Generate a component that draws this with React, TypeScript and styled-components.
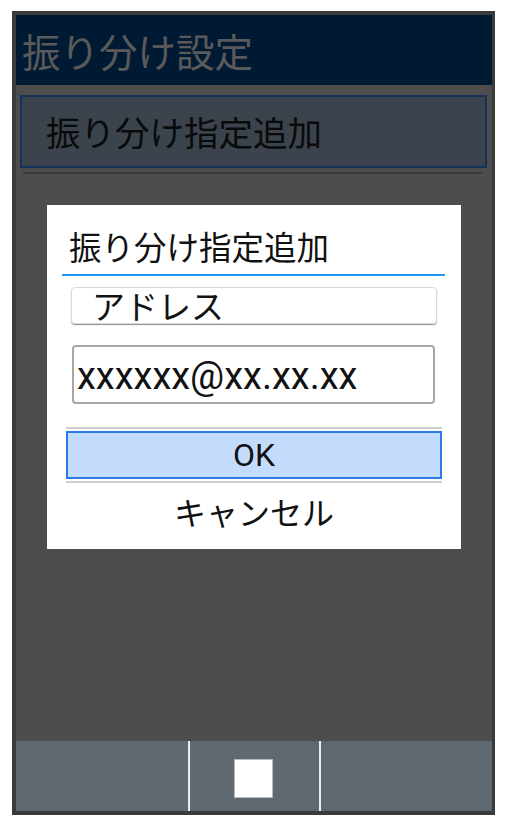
import React from "react";
import styled, { createGlobalStyle } from "styled-components";

const Global = createGlobalStyle`
  html, body { margin: 0; padding: 0; background: #ffffff; }
  body { font-family: Roboto, "Noto Sans CJK JP", sans-serif; }
  * { box-sizing: border-box; }
`;

const JP = `"Noto Sans CJK JP", "Noto Sans", sans-serif`;
const LATIN = `Roboto, "Noto Sans CJK JP", sans-serif`;

const Frame = styled.div`
  margin: 11px 0 0 12px;
  width: 483px;
  height: 804px;
  border: 4px solid #3a3a3a;
  border-right-width: 3px;
  display: flex;
  flex-direction: column;
  background: #4d4d4d;
`;

const TitleBar = styled.div`
  height: 70px;
  background: #011a33;
  display: flex;
  align-items: center;
  padding-left: 6px;
  font-family: ${JP};
  font-size: 38.5px;
  line-height: 1;
  color: #5a5a5a;
`;

const Content = styled.div`
  position: relative;
  flex: 1;
  display: flex;
  flex-direction: column;
  padding: 10px 4px 0 4px;
`;

const ListItem = styled.div`
  height: 73px;
  width: 467px;
  background: #3b434c;
  border: 2px solid #15335a;
  display: flex;
  align-items: center;
  padding-left: 24px;
  font-family: ${JP};
  font-size: 34.5px;
  line-height: 1;
  color: #0a0a0a;
`;

const ListDivider = styled.div`
  height: 2px;
  margin: 4px 6px 0 3px;
  background: #3a3a3a;
`;

const Dialog = styled.div`
  position: absolute;
  top: 120px;
  left: 31px;
  width: 414px;
  height: 344px;
  background: #ffffff;
  display: flex;
  flex-direction: column;
`;

const DialogTitle = styled.div`
  height: 69px;
  padding: 25px 0 0 22px;
  font-family: ${JP};
  font-size: 32.5px;
  line-height: 1;
  color: #111;
`;

const BlueRule = styled.div`
  height: 2px;
  margin: 0 16px 0 15px;
  background: #2196f3;
`;

const SelectBox = styled.div`
  margin: 11px 0 0 24px;
  width: 366px;
  height: 37px;
  border: 1px solid #dadada;
  border-radius: 4px;
  box-shadow: 0 1px 1px rgba(0, 0, 0, 0.45);
  display: flex;
  align-items: center;
  padding-left: 20px;
  font-family: ${JP};
  font-size: 33px;
  line-height: 1;
  color: #111;
`;

const InputBox = styled.div`
  margin: 21px 0 0 25px;
  width: 363px;
  height: 59px;
  border: 2px solid #a6a6a6;
  border-radius: 4px;
  display: flex;
  align-items: center;
  padding: 2px 0 0 3px;
  font-family: ${LATIN};
  font-size: 38px;
  line-height: 1;
  color: #111;
`;

const Rule = styled.div<{ $top: number }>`
  height: 2px;
  margin: ${(p) => p.$top}px 0 0 19px;
  width: 376px;
  background: #cfcfcf;
`;

const OkButton = styled.div`
  margin: 2px 0 0 19px;
  width: 376px;
  height: 48px;
  background: #c4dcfb;
  border: 2px solid #2a7be4;
  display: flex;
  align-items: center;
  justify-content: center;
  font-family: ${LATIN};
  font-size: 32px;
  line-height: 1;
  color: #111;
`;

const CancelButton = styled.div`
  margin-left: 19px;
  width: 376px;
  height: 55px;
  display: flex;
  align-items: center;
  justify-content: center;
  font-family: ${JP};
  font-size: 32px;
  line-height: 1;
  color: #111;
`;

const BottomBar = styled.div`
  height: 70px;
  background: #616970;
  display: grid;
  grid-template-columns: 172px 131px 1fr;
`;

const BarCell = styled.div<{ $divider?: boolean }>`
  display: flex;
  align-items: center;
  justify-content: center;
  border-left: ${(p) => (p.$divider ? "2px solid #ececec" : "none")};
`;

const HomeSquare = styled.div`
  width: 39px;
  height: 39px;
  margin: 5px 3px 0 0;
  background: #ffffff;
  border: 1px solid #b8bcc0;
`;

export default function App() {
  return (
    <>
      <Global />
      <Frame>
        <TitleBar>振り分け設定</TitleBar>
        <Content>
          <ListItem>振り分け指定追加</ListItem>
          <ListDivider />
          <Dialog>
            <DialogTitle>振り分け指定追加</DialogTitle>
            <BlueRule />
            <SelectBox>アドレス</SelectBox>
            <InputBox>xxxxxx@xx.xx.xx</InputBox>
            <Rule $top={23} />
            <OkButton>OK</OkButton>
            <Rule $top={2} />
            <CancelButton>キャンセル</CancelButton>
          </Dialog>
        </Content>
        <BottomBar>
          <BarCell />
          <BarCell $divider>
            <HomeSquare />
          </BarCell>
          <BarCell $divider />
        </BottomBar>
      </Frame>
    </>
  );
}
